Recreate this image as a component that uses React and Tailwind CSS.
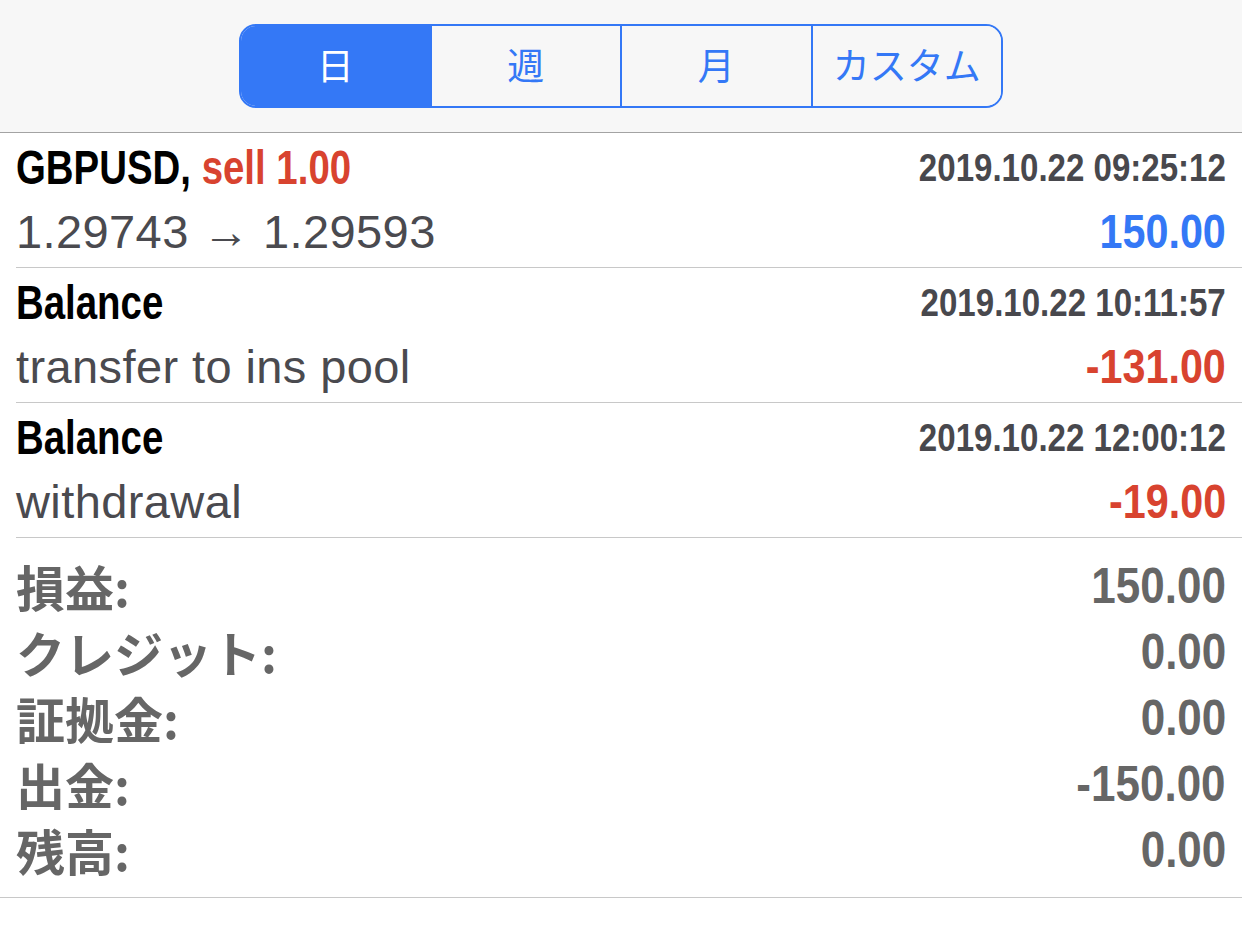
import React, { useState } from 'react';

const trades = [
    { title: 'GBPUSD,', action: 'sell 1.00', time: '2019.10.22 09:25:12', desc: '1.29743 → 1.29593', amount: '150.00', positive: true },
    { title: 'Balance', time: '2019.10.22 10:11:57', desc: 'transfer to ins pool', amount: '-131.00' },
    { title: 'Balance', time: '2019.10.22 12:00:12', desc: 'withdrawal', amount: '-19.00' },
];

const summary = [
    ['損益:', '150.00'],
    ['クレジット:', '0.00'],
    ['証拠金:', '0.00'],
    ['出金:', '-150.00'],
    ['残高:', '0.00'],
];

function App() {
    const [period, setPeriod] = useState('day'); // day / week / month / custom
    const tabs = [['day', '日'], ['week', '週'], ['month', '月'], ['custom', 'カスタム']];

    return (
        <div className="min-h-screen bg-white font-['Liberation_Sans','Noto_Sans_CJK_JP',sans-serif]">
            {/* Period selector */}
            <div className="h-[133px] bg-[#f7f7f7] border-b border-[#a3a3a3] flex justify-center pt-[24px]">
                <div className="flex h-[84px] w-[764px] border-2 border-[#3478f6] rounded-[17px] overflow-hidden">
                    {tabs.map(([key, label], i) => (
                        <button
                            key={key}
                            onClick={() => setPeriod(key)}
                            className={`flex-1 flex items-center justify-center pb-[2px] text-[37px] font-['Noto_Sans_CJK_JP',sans-serif] ${i > 0 ? 'border-l-2 border-[#3478f6]' : ''} ${period === key ? 'bg-[#3478f6] text-white' : 'bg-[#f7f7f7] text-[#3478f6]'}`}
                        >
                            {label}
                        </button>
                    ))}
                </div>
            </div>

            {/* Deals */}
            {trades.map((t, i) => (
                <div key={i} className="pl-[16px]">
                    <div className="border-b border-[#c8c8c8] pr-[16px] py-[3px]">
                        <div className="h-[64px] flex items-center justify-between">
                            <div className="text-[48px] font-bold text-black whitespace-nowrap origin-left scale-x-[0.8]">
                                {t.title}
                                {t.action && <span className="text-[#d8432f]"> {t.action}</span>}
                            </div>
                            <div className="text-[38px] font-bold text-[#48484d] whitespace-nowrap origin-right scale-x-[0.87]">{t.time}</div>
                        </div>
                        <div className="h-[64px] flex items-center justify-between">
                            <div className="text-[47px] tracking-[0.4px] text-[#4a4a4f] whitespace-nowrap">{t.desc}</div>
                            <div className={`text-[48px] font-bold whitespace-nowrap origin-right scale-x-[0.86] ${t.positive ? 'text-[#3478f6]' : 'text-[#d8432f]'}`}>{t.amount}</div>
                        </div>
                    </div>
                </div>
            ))}

            {/* Totals */}
            <div className="border-b border-[#c8c8c8] px-[16px] pt-[15px] pb-[14px]">
                {summary.map(([label, value]) => (
                    <div key={label} className="h-[66px] flex items-center justify-between text-[#666666] font-bold">
                        <div className="text-[49px] font-['Noto_Sans_CJK_JP',sans-serif]">{label}</div>
                        <div className="text-[50px] origin-right scale-x-[0.88]">{value}</div>
                    </div>
                ))}
            </div>
        </div>
    );
}

export default App;
